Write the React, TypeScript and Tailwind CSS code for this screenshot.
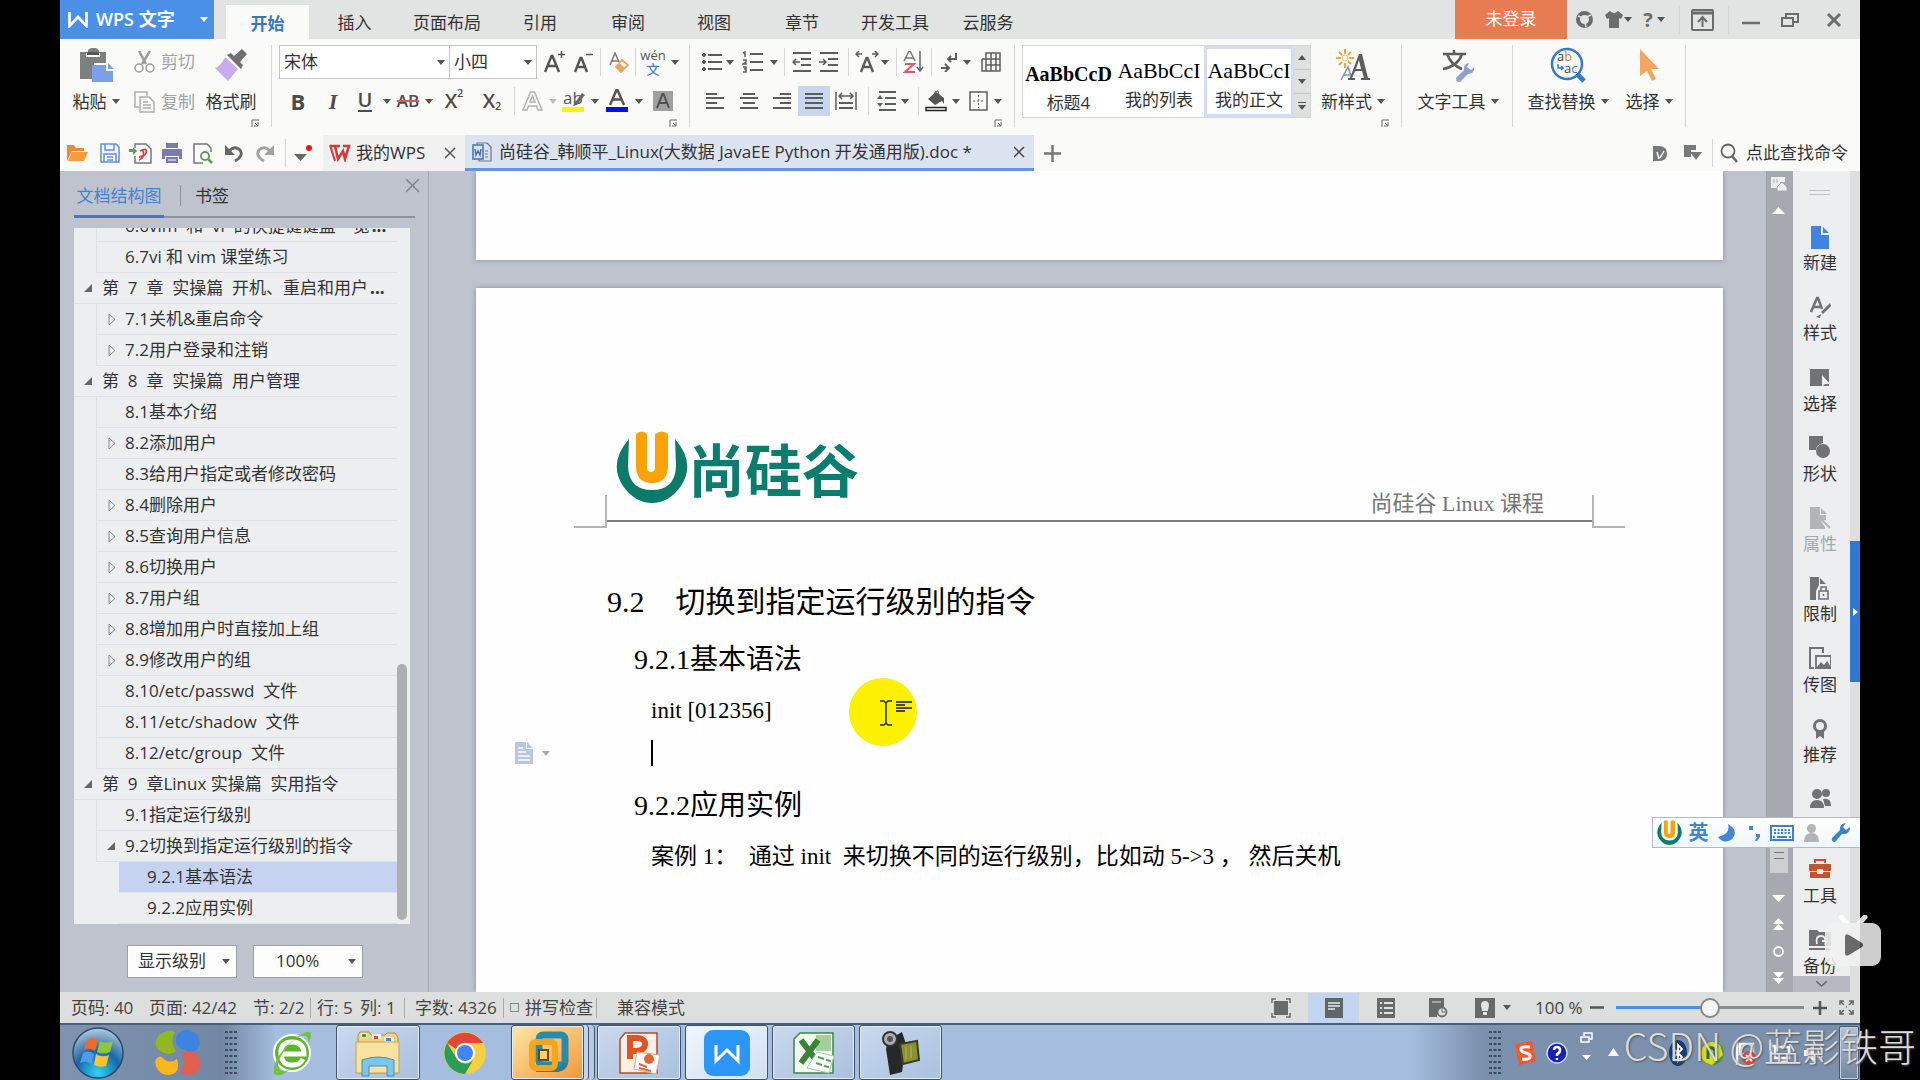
import type { ReactNode } from "react";

const ui = "font-['Open_Sans','Noto_Sans_CJK_SC',sans-serif]";
const serif = "font-['Liberation_Serif','Noto_Sans_CJK_SC',serif]";

function Icon({ w = 20, h = 20, box, children }: { w?: number; h?: number; box?: string; children: ReactNode }) {
  return (
    <svg width={w} height={h} viewBox={box ?? `0 0 ${w} ${h}`} fill="none" aria-hidden="true" className="shrink-0">
      {children}
    </svg>
  );
}

function Caret({ className = "text-[#555]" }: { className?: string }) {
  return (
    <svg width="8" height="5" viewBox="0 0 8 5" aria-hidden="true" className={`shrink-0 ${className}`}>
      <path d="M0 0h8L4 5z" fill="currentColor" />
    </svg>
  );
}

function Tool({ label, w, className = "", children }: { label: string; w: string; className?: string; children: ReactNode }) {
  return (
    <button aria-label={label} className={`flex h-[30px] shrink-0 items-center justify-center ${w} ${className}`}>
      {children}
    </button>
  );
}

function Drop({ label, w = "w-3", className }: { label: string; w?: string; className?: string }) {
  return (
    <Tool label={label} w={w}>
      <Caret className={className} />
    </Tool>
  );
}

function Sep({ w }: { w: string }) {
  return (
    <span className={`flex h-7 shrink-0 justify-center ${w}`}>
      <span className="w-px bg-[#d6d6d6]" />
    </span>
  );
}

function Launcher() {
  return (
    <button aria-label="更多设置" className="ml-auto mr-3 block h-2">
      <Icon w={8} h={8}>
        <path d="M1 8V1h7M7 3v4H3M4 4l3 3" stroke="#666" />
      </Icon>
    </button>
  );
}

function Group({ w, children }: { w: string; children: ReactNode }) {
  return <div className={`flex h-[82px] shrink-0 flex-col gap-px border-r border-[#d6d6d6] ${w}`}>{children}</div>;
}

function Big({ label, w, caret, children }: { label: string; w: string; caret?: boolean; children: ReactNode }) {
  return (
    <button className={`flex shrink-0 flex-col items-center ${w}`}>
      <span className="flex h-[40px] items-center justify-center">{children}</span>
      <span className="flex h-[33px] items-center gap-[5px] whitespace-nowrap">
        {label}
        {caret && <Caret />}
      </span>
    </button>
  );
}

const menus = [
  { name: "插入", w: "w-[91px]" },
  { name: "页面布局", w: "w-[94px]" },
  { name: "引用", w: "w-[92px]" },
  { name: "审阅", w: "w-[84px]" },
  { name: "视图", w: "w-[88px]" },
  { name: "章节", w: "w-[88px]" },
  { name: "开发工具", w: "w-[98px]" },
  { name: "云服务", w: "w-[88px]" },
];

function TitleBar() {
  return (
    <header className="flex h-[39px] shrink-0 items-stretch bg-[#e2e3e3] text-[#333]">
      <button className="flex w-[154px] shrink-0 items-center bg-[#4a90e6] pl-2 text-[18px] font-semibold text-white">
        <Icon w={20} h={17}>
          <path d="M1.5 1v14l8.500-9 8.500 9V1" stroke="#fff" strokeWidth="2.600" />
        </Icon>
        <span className="ml-2 whitespace-nowrap">WPS 文字</span>
        <span className="ml-auto mr-[6px]"><Caret className="text-white" /></span>
      </button>
      <nav className="ml-3 flex items-end">
        <button className="h-[34px] w-[83px] border border-b-0 border-white bg-[#fafbf9] pt-[2px] font-semibold text-[#3a76bd]">开始</button>
        {menus.map((m) => (
          <button key={m.name} className={`h-[34px] pt-[2px] ${m.w}`}>{m.name}</button>
        ))}
      </nav>
      <button className="ml-auto w-28 bg-[#e77b52] pb-[2px] text-white">未登录</button>
      <div className="flex items-center pr-[7px]">
        <Tool label="云" w="w-[34px]">
          <Icon w={17} h={17}>
            <circle cx="8.500" cy="8.500" r="6.500" stroke="#6b6c6c" strokeWidth="4" />
            <path d="M2 5l6 2 2 9M15 4L8 7" stroke="#e2e3e3" strokeWidth="1.500" />
          </Icon>
        </Tool>
        <Tool label="皮肤" w="w-[34px]" className="gap-px">
          <Icon w={18} h={17}>
            <path d="M5 0q4 4 8 0l5 4-2 4-2-1v10H4V7L2 8 0 4z" fill="#6b6c6c" />
          </Icon>
          <Caret />
        </Tool>
        <Tool label="帮助" w="w-[38px]" className="gap-1 text-[20px] font-bold text-[#6b6c6c]">
          ?<Caret />
        </Tool>
        <Sep w="w-3" />
        <Tool label="隐藏功能区" w="w-[34px]">
          <Icon w={23} h={22}>
            <rect x="1" y="1" width="21" height="20" rx="1" stroke="#6b6c6c" strokeWidth="2" />
            <path d="M1 4h21" stroke="#6b6c6c" strokeWidth="3" />
            <path d="M11.500 18V9M7 13l4.500-5 4.500 5" stroke="#6b6c6c" strokeWidth="2" />
          </Icon>
        </Tool>
        <Sep w="w-[18px]" />
        <Tool label="最小化" w="w-7">
          <Icon w={18} h={10}><path d="M0 8h18" stroke="#6b6c6c" strokeWidth="2.500" /></Icon>
        </Tool>
        <Tool label="还原" w="w-[50px]">
          <Icon w={18} h={16}>
            <path d="M1 6h11v8H1zM5 5V2h12v8h-4" stroke="#6b6c6c" strokeWidth="2" />
          </Icon>
        </Tool>
        <Tool label="关闭" w="w-[38px]">
          <Icon w={16} h={16}><path d="M2 2l12 12M14 2L2 14" stroke="#6b6c6c" strokeWidth="3" /></Icon>
        </Tool>
      </div>
    </header>
  );
}

function Lines({ rows }: { rows: number[][] }) {
  return (
    <>
      {rows.map(([x, y, len], i) => (
        <path key={i} d={`M${x} ${y}h${len}`} stroke="#5c5e5e" strokeWidth="2" />
      ))}
    </>
  );
}

function Ribbon() {
  return (
    <div className="flex shrink-0 items-start overflow-hidden bg-[#fafbf9] pb-2 pt-[6px] text-[#333]">
      <Group w="w-[212px]">
        <div className="flex h-[73px]">
          <Big label="粘贴" w="w-[72px]" caret>
            <Icon w={36} h={34}>
              <path d="M2 4h8V2l3-2h5l3 2v2h7v11H16v16H2z" fill="#7e7f7f" />
              <path d="M8 5h14v4H8z" fill="#fafbf9" />
              <path d="M9 4h12v3H9z" fill="#555" />
              <path d="M14 17h14v6h7v11H14z" fill="#7aa1e8" />
              <path d="M30 15l6 6h-6z" fill="#7aa1e8" />
            </Icon>
          </Big>
          <div className="flex w-[70px] flex-col gap-[6px] text-[#a3a3a3]">
            <button className="flex h-[34px] items-center gap-[6px] pl-[2px]">
              <Icon w={21} h={22}>
                <path d="M5 0l7 13M16 0L8 13" stroke="#9b9b9b" strokeWidth="2.500" />
                <circle cx="5" cy="17" r="4" stroke="#9b9b9b" strokeWidth="1.500" />
                <circle cx="16" cy="17" r="4" stroke="#9b9b9b" strokeWidth="1.500" />
              </Icon>
              剪切
            </button>
            <button className="flex h-[33px] items-center gap-[6px] pl-[2px]">
              <Icon w={21} h={22}>
                <path d="M5 16H1V1h12v4" stroke="#b0b0b0" strokeWidth="1.500" />
                <path d="M6 6h9l5 5v10H6zM9 11h5M9 14h8M9 17h8" stroke="#b0b0b0" strokeWidth="1.500" />
              </Icon>
              复制
            </button>
          </div>
          <Big label="格式刷" w="w-[58px]">
            <Icon w={34} h={33}>
              <path d="M11 8l13 12-10 12L1 19q6-2 10-11z" fill="#c8adee" />
              <path d="M13 6l4-2 3 3 8-7 5 5-7 8 3 3-2 4z" fill="#707070" />
            </Icon>
          </Big>
        </div>
        <Launcher />
      </Group>

      <Group w="w-[418px]">
        <div className="flex h-[34px] items-center pl-[7px]">
          <label className="relative flex h-[34px] w-[171px] items-center border border-[#c6c6c6] bg-white">
            <select aria-label="字体" className="w-full appearance-none bg-transparent pl-1 outline-none">
              <option>宋体</option>
            </select>
            <span className="pointer-events-none absolute right-1"><Caret /></span>
          </label>
          <label className="relative flex h-[34px] w-[87px] items-center border border-l-0 border-[#c6c6c6] bg-white">
            <select aria-label="字号" className="w-full appearance-none bg-transparent pl-1 outline-none">
              <option>小四</option>
            </select>
            <span className="pointer-events-none absolute right-1"><Caret /></span>
          </label>
          <Tool label="增大字号" w="w-9">
            <Icon w={22} h={22}>
              <path d="M1 21L7.500 5h1L15 21M4 15h8" stroke="#555" strokeWidth="2.500" />
              <path d="M14 3.500h7M17.500 0v7" stroke="#555" strokeWidth="1.500" />
            </Icon>
          </Tool>
          <Tool label="减小字号" w="w-[22px]">
            <Icon w={20} h={22}>
              <path d="M1 21L6.500 7h1L13 21M3.500 16h7" stroke="#555" strokeWidth="2.500" />
              <path d="M12 3.500h7" stroke="#555" strokeWidth="1.500" />
            </Icon>
          </Tool>
          <Sep w="w-[10px]" />
          <Tool label="清除格式" w="w-7">
            <Icon w={20} h={21}>
              <path d="M1 13L6 1l4 9M3 9h6" stroke="#777" strokeWidth="1.500" />
              <path d="M13 8l6 5-7 7-5-5z" stroke="#e9a45f" strokeWidth="1.800" />
              <path d="M10 11l6 5-4 4-5-5z" fill="#e9a45f" />
            </Icon>
          </Tool>
          <Sep w="w-1" />
          <Tool label="拼音指南" w="w-8" className="flex-col text-[13px] leading-[14px] text-[#555]">
            <span>wén</span>
            <span className="font-medium text-[#4f7ed6]">文</span>
          </Tool>
          <Drop label="拼音选项" />
        </div>
        <div className="mt-1 flex h-[34px] items-center pl-[7px] text-[22px] text-[#4c4c4c]">
          <Tool label="加粗" w="w-[38px]" className="font-bold">B</Tool>
          <Tool label="倾斜" w="w-8" className="font-['Liberation_Serif',serif] font-bold italic">I</Tool>
          <Tool label="下划线" w="w-8"><span className="border-b-2 border-[#4c4c4c] text-[20px] leading-[20px] font-semibold">U</span></Tool>
          <Drop label="下划线选项" />
          <Tool label="删除线" w="w-[30px]" className="text-[17px] font-semibold line-through decoration-[#d65a5a] decoration-2">AB</Tool>
          <Drop label="删除线选项" />
          <Tool label="上标" w="w-[38px]" className="text-[20px] font-semibold">
            X<sup className="-top-2 text-[11px]">2</sup>
          </Tool>
          <Tool label="下标" w="w-[38px]" className="text-[20px] font-semibold">
            X<sub className="top-[5px] text-[11px]">2</sub>
          </Tool>
          <Sep w="w-[6px]" />
          <Tool label="文字效果" w="w-[30px]">
            <Icon w={21} h={20}>
              <path d="M1 19L8.500 1h4L20 19h-4l-1.500-4h-8L5 19zM8 11h5l-2.500-6z" stroke="#b2b2b2" strokeWidth="1.500" />
            </Icon>
          </Tool>
          <Drop label="文字效果选项" className="text-[#bbb]" />
          <Tool label="突出显示" w="w-[30px]">
            <Icon w={24} h={24}>
              <text x="1" y="15" fontSize="17" fontFamily="Open Sans" fill="#555">ab</text>
              <path d="M12 15l8-11 3 2-8 10-4 1z" fill="#666" />
              <path d="M0 18h22v5H0z" fill="#fdf200" />
            </Icon>
          </Tool>
          <Drop label="突出显示选项" />
          <Tool label="字体颜色" w="w-8">
            <Icon w={22} h={24}>
              <path d="M4 16L10.500 1h1L18 16M7 10.500h8" stroke="#555" strokeWidth="2.500" />
              <path d="M0 18h22v5H0z" fill="#0410e0" />
            </Icon>
          </Tool>
          <Drop label="字体颜色选项" />
          <Tool label="字符底纹" w="w-9">
            <Icon w={20} h={20}>
              <path d="M0 0h20v20H0z" fill="#a0a0a0" />
              <path d="M4 17L9.500 3h1L16 17M6 12h8" stroke="#505050" strokeWidth="2" />
            </Icon>
          </Tool>
        </div>
        <Launcher />
      </Group>

      <Group w="w-[325px]">
        <div className="flex h-[34px] items-center pl-2">
          <Tool label="项目符号" w="w-[26px]">
            <Icon w={21} h={20}>
              <Lines rows={[[7, 3, 14], [7, 10, 14], [7, 17, 14]]} />
              <path d="M3 1v4M1 3h4M3 8v4M1 10h4M3 15v4M1 17h4" stroke="#5c5e5e" strokeWidth="2" />
            </Icon>
          </Tool>
          <Drop label="项目符号选项" />
          <Tool label="编号" w="w-8">
            <Icon w={21} h={22}>
              <Lines rows={[[8, 3, 13], [8, 11, 13], [8, 19, 13]]} />
              <path d="M1 2l2-1v5M1 9h3v2L1 13h4M1 16h3v2H2h2v3H1" stroke="#5c5e5e" strokeWidth="1.500" />
            </Icon>
          </Tool>
          <Drop label="编号选项" />
          <Sep w="w-2" />
          <Tool label="减少缩进" w="w-[26px]">
            <Icon w={19} h={20}>
              <Lines rows={[[1, 1, 18], [9, 7, 10], [9, 13, 10], [1, 19, 18]]} />
              <path d="M8 10H2M4 7l-3 3 3 3" stroke="#5c5e5e" strokeWidth="1.500" />
            </Icon>
          </Tool>
          <Tool label="增加缩进" w="w-7">
            <Icon w={19} h={20}>
              <Lines rows={[[1, 1, 18], [9, 7, 10], [9, 13, 10], [1, 19, 18]]} />
              <path d="M0 10h6M4 7l3 3-3 3" stroke="#5c5e5e" strokeWidth="1.500" />
            </Icon>
          </Tool>
          <Sep w="w-3" />
          <Tool label="中文版式" w="w-[25px]">
            <Icon w={24} h={22}>
              <path d="M6 21l5.500-14h1L18 21M8 16h8" stroke="#5c5e5e" strokeWidth="2.500" />
              <path d="M1 3h6M4 0L1 3l3 3M17 3h6M20 0l3 3-3 3" stroke="#5c5e5e" strokeWidth="1.500" />
            </Icon>
          </Tool>
          <Drop label="中文版式选项" />
          <Sep w="w-[10px]" />
          <Tool label="排序" w="w-6">
            <Icon w={21} h={22}>
              <path d="M1 10L6 0h1l5 10M3 7h7" stroke="#777" strokeWidth="1.500" />
              <path d="M2 13h9L2 21h10" stroke="#e0566a" strokeWidth="2" />
              <path d="M17 0v20M14 16l3 4 3-4" stroke="#666" strokeWidth="1.500" />
            </Icon>
          </Tool>
          <Sep w="w-3" />
          <Tool label="显示标记" w="w-6">
            <Icon w={17} h={19}>
              <path d="M15 0v6H7M10 3L7 6l3 3M0 15h7M4 11l4 4-4 4" stroke="#5c5e5e" strokeWidth="2" />
            </Icon>
          </Tool>
          <Drop label="显示标记选项" />
          <Tool label="表格" w="w-9">
            <Icon w={20} h={20}>
              <path d="M5 1h14v18H5zM5 7h14M5 13h14M10 1v18M15 1v18M1 7v12h4M1 7h4" stroke="#5c5e5e" strokeWidth="1.500" />
            </Icon>
          </Tool>
        </div>
        <div className="mt-1 flex h-[34px] items-center pl-2">
          <Tool label="左对齐" w="w-[34px]">
            <Icon w={18} h={16}><Lines rows={[[0, 1, 11], [0, 5, 18], [0, 10, 11], [0, 15, 18]]} /></Icon>
          </Tool>
          <Tool label="居中" w="w-[34px]">
            <Icon w={18} h={16}><Lines rows={[[3, 1, 12], [0, 5, 18], [3, 10, 12], [0, 15, 18]]} /></Icon>
          </Tool>
          <Tool label="右对齐" w="w-8">
            <Icon w={18} h={16}><Lines rows={[[7, 1, 11], [0, 5, 18], [7, 10, 11], [0, 15, 18]]} /></Icon>
          </Tool>
          <Tool label="两端对齐" w="w-8" className="bg-[#c8d7ef]">
            <Icon w={18} h={16}><Lines rows={[[0, 1, 18], [0, 5, 18], [0, 10, 18], [0, 15, 18]]} /></Icon>
          </Tool>
          <Tool label="分散对齐" w="w-8">
            <Icon w={22} h={18}>
              <path d="M1 0v18M21 0v18M4 4h14M7 1L4 4l3 3M15 1l3 3-3 3" stroke="#5c5e5e" strokeWidth="1.500" />
              <Lines rows={[[4, 11, 14], [4, 16, 14]]} />
            </Icon>
          </Tool>
          <Sep w="w-3" />
          <Tool label="行距" w="w-6">
            <Icon w={21} h={20}>
              <Lines rows={[[3, 1, 17], [9, 7, 11], [9, 13, 11], [3, 19, 17]]} />
              <path d="M1 8l3-4 3 4zM1 12l3 4 3-4z" fill="#5c5e5e" />
            </Icon>
          </Tool>
          <Drop label="行距选项" w="w-[14px]" />
          <Sep w="w-3" />
          <Tool label="底纹颜色" w="w-6">
            <Icon w={22} h={22}>
              <path d="M3 9l8-7 8 6v6l-2-3-7 4z" fill="#555" />
              <path d="M9 5q1-5 4-4l1 4" stroke="#555" />
              <path d="M1 17.500h20v3H1z" stroke="#222" strokeWidth="1.500" />
            </Icon>
          </Tool>
          <Drop label="底纹选项" w="w-4" />
          <Tool label="边框" w="w-7">
            <Icon w={19} h={20}>
              <path d="M1 1h17v18H1z" stroke="#5c5e5e" strokeWidth="1.500" />
              <path d="M9.500 4v13M4 10h12" stroke="#5c5e5e" strokeDasharray="2 2" />
            </Icon>
          </Tool>
          <Drop label="边框选项" />
        </div>
        <Launcher />
      </Group>

      <Group w="w-[387px]">
        <div className="flex h-[73px] pl-[7px]">
          <div className="flex h-[73px] w-[289px] border border-[#d5d7da] bg-white text-center">
            <button className="w-[91px] overflow-hidden">
              <StyleSample text="AaBbCcD" name="标题4" bold />
            </button>
            <button className="w-[90px] overflow-hidden border-3 border-transparent">
              <StyleSample text="AaBbCcI" name="我的列表" />
            </button>
            <button className="w-[90px] overflow-hidden border-3 border-[#d3dbf5]">
              <StyleSample text="AaBbCcI" name="我的正文" />
            </button>
            <div className="flex flex-1 flex-col divide-y divide-[#c8c8c8] bg-[#dfe0e0]">
              <button aria-label="上一行" className="flex flex-1 items-center justify-center">
                <Icon w={8} h={5}><path d="M0 5h8L4 0z" fill="#555" /></Icon>
              </button>
              <button aria-label="下一行" className="flex flex-1 items-center justify-center"><Caret /></button>
              <button aria-label="全部样式" className="flex flex-1 flex-col items-center justify-center gap-[2px]">
                <span className="h-px w-2 bg-[#555]" />
                <Caret />
              </button>
            </div>
          </div>
          <Big label="新样式" w="w-[84px]" caret>
            <Icon w={34} h={34}>
              <path d="M9 1v5M9 15v5M0 10h5M13 10h5M3 4l3 3M12 13l3 3M15 4l-3 3M3 17l3-3" stroke="#f0a53c" strokeWidth="2" />
              <circle cx="9" cy="10" r="3" stroke="#f5c265" />
              <path d="M5 32l7-13 4 12M7 27h8" stroke="#8592b8" strokeWidth="1.500" />
              <path d="M23 6h3l6 24h2v2h-9v-2h3l-2-7h-7l-3 7h3v2h-7v-2h2zM20 21h5l-2-9z" fill="#5c5e5e" />
            </Icon>
          </Big>
        </div>
        <Launcher />
      </Group>

      <Group w="w-[111px]">
        <Big label="文字工具" w="w-[112px]" caret>
          <Icon w={33} h={33}>
            <path d="M1 5h23M12 1v4M5 5q4 11 15 15M20 5Q16 17 1 20" stroke="#5c5e5e" strokeWidth="2.500" />
            <path d="M14 29l8-8q-1-6 5-7l-2 4 4 3 3-3q1 7-6 7l-8 8q-4 0-4-4z" fill="#8f9fd0" />
          </Icon>
        </Big>
      </Group>

      <Group w="w-[173px]">
        <div className="flex pl-[2px]">
          <Big label="查找替换" w="w-[106px]" caret>
            <Icon w={36} h={36}>
              <circle cx="17" cy="17" r="15" stroke="#3578cf" strokeWidth="2.500" />
              <path d="M27 27l7 7" stroke="#3578cf" strokeWidth="5" />
              <text x="7" y="14" fontSize="13" fontFamily="Open Sans" fill="#444">a<tspan fill="#d9823b">b</tspan></text>
              <text x="14" y="26" fontSize="13" fontFamily="Open Sans" fill="#444">a<tspan fill="#3578cf">c</tspan></text>
              <path d="M8 17v4h5M11 19l2 2-2 2" stroke="#3578cf" strokeWidth="1.500" />
            </Icon>
          </Big>
          <Big label="选择" w="w-[56px]" caret>
            <Icon w={21} h={32}>
              <path d="M1 0l19 20h-8l5 10-4 2-5-10-7 5z" fill="#f2a65f" />
            </Icon>
          </Big>
        </div>
      </Group>
    </div>
  );
}

function StyleSample({ text, name, bold }: { text: string; name: string; bold?: boolean }) {
  return (
    <span className="flex h-full flex-col items-center justify-end">
      <span className={`${serif} whitespace-nowrap leading-[30px] text-black ${bold ? "text-[20px] font-bold" : "text-[22px]"}`}>{text}</span>
      <span className="whitespace-nowrap leading-[28px]">{name}</span>
    </span>
  );
}

function TabStrip() {
  return (
    <div className="flex h-9 shrink-0 items-center bg-[#fafbf9] text-[#333]">
      <Tool label="打开" w="w-[34px]">
        <Icon w={22} h={18}>
          <path d="M1 17V1h7l2 3h8v3H6z" fill="#ec8b35" />
          <path d="M6 8h16l-4 9H2z" fill="#f79b3e" />
        </Icon>
      </Tool>
      <Tool label="保存" w="w-[31px]">
        <Icon w={20} h={20}>
          <path d="M1 1h15l3 3v15H1z" stroke="#5f8ee0" strokeWidth="1.500" />
          <path d="M5 1v6h9V1M4 19v-8h12v8M7 14h6M7 17h6" stroke="#5f8ee0" strokeWidth="1.500" />
        </Icon>
      </Tool>
      <Tool label="输出为PDF" w="w-[31px]">
        <Icon w={23} h={21}>
          <path d="M6 5V1h11l5 5v14H6v-7" stroke="#777" strokeWidth="1.500" />
          <path d="M0 6h4V4l4 4-4 4v-3H0z" fill="#58a05a" />
          <path d="M11 8q8-4 6 2-1 3-7 4M14 7q2 8-4 10" stroke="#d24545" strokeWidth="1.800" />
        </Icon>
      </Tool>
      <Tool label="打印" w="w-[31px]">
        <Icon w={20} h={20}>
          <path d="M4 0h12v5H4zM0 6h20v10h-3v-3H3v3H0zM4 14h12v6H4z" fill="#7d7ab2" />
          <path d="M6 17h8" stroke="#fff" />
        </Icon>
      </Tool>
      <Tool label="打印预览" w="w-[31px]">
        <Icon w={20} h={21}>
          <path d="M18 9V5l-4-4H1v19h9" stroke="#777" strokeWidth="1.500" />
          <circle cx="12" cy="13" r="4" stroke="#5f9c55" strokeWidth="1.800" />
          <path d="M15 16l4 4" stroke="#5f9c55" strokeWidth="2.500" />
        </Icon>
      </Tool>
      <Tool label="撤销" w="w-[31px]">
        <Icon w={18} h={18}>
          <path d="M4 7q6-6 11-1 4 6-5 11" stroke="#666" strokeWidth="3" />
          <path d="M0 1v10h10z" fill="#666" />
        </Icon>
      </Tool>
      <Tool label="恢复" w="w-[31px]">
        <Icon w={18} h={18}>
          <path d="M14 7Q8 1 3 6q-4 6 5 11" stroke="#a2a2a2" strokeWidth="3" />
          <path d="M18 1v10H8z" fill="#a2a2a2" />
        </Icon>
      </Tool>
      <Sep w="w-[10px]" />
      <Tool label="自定义快速访问" w="w-[33px]" className="pr-[5px]">
        <Icon w={20} h={20}>
          <path d="M0 11h13l-6.500 7z" fill="#666" />
          <circle cx="15" cy="5" r="3" fill="#f0120c" />
        </Icon>
      </Tool>
      <div className="flex h-9 w-[142px] shrink-0 items-center bg-[#f2f1f1] pl-[6px]">
        <button className="flex items-center gap-[5px] whitespace-nowrap">
          <Icon w={22} h={18}>
            <path d="M1 2h10M6 2l3 13 5-8 2 8 4-13h-6" stroke="#d8393c" strokeWidth="2.600" />
            <path d="M1 1l5 16" stroke="#d8393c" strokeWidth="2" />
          </Icon>
          我的WPS
        </button>
        <button aria-label="关闭我的WPS" className="ml-auto mr-[9px]">
          <Icon w={11} h={12}><path d="M0 1l10 10M10 1L0 11" stroke="#555" strokeWidth="1.500" /></Icon>
        </button>
      </div>
      <div className="flex h-9 w-[569px] shrink-0 items-center border-b-3 border-[#6496d8] bg-[#dbe2f0] pl-[7px]">
        <button className="flex items-center gap-[7px] whitespace-nowrap">
          <Icon w={20} h={20}>
            <path d="M1 3h10v14H1z" fill="#dbe2f0" stroke="#4471b5" strokeWidth="1.500" />
            <path d="M3 7l1 6 2-4 2 4 1-6" stroke="#4471b5" strokeWidth="1.500" />
            <path d="M5 3V1h10l4 4v14H7v-2M13 9h3M13 12h3M13 15h3" stroke="#6c7890" strokeWidth="1.200" />
          </Icon>
          尚硅谷_韩顺平_Linux(大数据 JavaEE Python 开发通用版).doc *
        </button>
        <button aria-label="关闭文档" className="ml-auto mr-[9px]">
          <Icon w={11} h={12}><path d="M0 1l10 10M10 1L0 11" stroke="#444" strokeWidth="1.500" /></Icon>
        </button>
      </div>
      <Tool label="新建标签" w="w-9">
        <Icon w={17} h={17}><path d="M8.500 0v17M0 8.500h17" stroke="#777" strokeWidth="2.500" /></Icon>
      </Tool>
      <div className="ml-auto flex items-center pr-3">
        <Tool label="文档" w="w-9">
          <Icon w={14} h={15}>
            <path d="M0 0h6q8 0 8 7.500T6 15H0z" fill="#77787a" />
            <path d="M4 6l2 7M7 12l4-7" stroke="#fafbf9" strokeWidth="1.500" />
          </Icon>
        </Tool>
        <Tool label="窗口" w="w-[30px]">
          <Icon w={18} h={16}>
            <path d="M0 0h12v5H7v7H0z" fill="#77787a" />
            <path d="M6 7h12l-6 8z" fill="#77787a" />
          </Icon>
        </Tool>
        <Sep w="w-2" />
        <button className="flex items-center gap-2 whitespace-nowrap pl-1">
          <Icon w={18} h={20}>
            <circle cx="8" cy="8" r="6.500" stroke="#666" strokeWidth="1.800" />
            <path d="M12 13l5 6" stroke="#666" strokeWidth="2.500" />
          </Icon>
          点此查找命令
        </button>
      </div>
    </div>
  );
}

type Node = { text: string; level: 0 | 1 | 2; mark?: "open" | "closed"; cut?: boolean; active?: boolean };

const outline: Node[] = [
  { text: "6.6vim  和  vi  的快捷键键盘一览", level: 1, cut: true },
  { text: "6.7vi 和 vim 课堂练习", level: 1 },
  { text: "第  7  章  实操篇  开机、重启和用户", level: 0, mark: "open", cut: true },
  { text: "7.1关机&重启命令", level: 1, mark: "closed" },
  { text: "7.2用户登录和注销", level: 1, mark: "closed" },
  { text: "第  8  章  实操篇  用户管理", level: 0, mark: "open" },
  { text: "8.1基本介绍", level: 1 },
  { text: "8.2添加用户", level: 1, mark: "closed" },
  { text: "8.3给用户指定或者修改密码", level: 1 },
  { text: "8.4删除用户", level: 1, mark: "closed" },
  { text: "8.5查询用户信息", level: 1, mark: "closed" },
  { text: "8.6切换用户", level: 1, mark: "closed" },
  { text: "8.7用户组", level: 1, mark: "closed" },
  { text: "8.8增加用户时直接加上组", level: 1, mark: "closed" },
  { text: "8.9修改用户的组", level: 1, mark: "closed" },
  { text: "8.10/etc/passwd  文件", level: 1 },
  { text: "8.11/etc/shadow  文件", level: 1 },
  { text: "8.12/etc/group  文件", level: 1 },
  { text: "第  9  章Linux 实操篇  实用指令", level: 0, mark: "open" },
  { text: "9.1指定运行级别", level: 1 },
  { text: "9.2切换到指定运行级别的指令", level: 1, mark: "open" },
  { text: "9.2.1基本语法", level: 2, active: true },
  { text: "9.2.2应用实例", level: 2 },
];

const indent = ["ml-0 pl-[10px]", "ml-[22px] border-l pl-[10px]", "ml-[45px] pl-[10px]"];

function OutlineRow({ node }: { node: Node }) {
  return (
    <li className="flex h-[31px] shrink-0">
      <button
        className={`flex flex-1 items-center border-b border-[#e0e1e4] text-left ${indent[node.level]} ${
          node.active ? "bg-[#c5d3f1]" : ""
        }`}
      >
        <span className="w-[18px] shrink-0">
          {node.mark === "open" && <Icon w={9} h={9}><path d="M8 0v8H0z" fill="#666" /></Icon>}
          {node.mark === "closed" && <Icon w={9} h={13}><path d="M2 1l6 5.500L2 12z" stroke="#888" /></Icon>}
        </span>
        <span className="whitespace-pre">{node.text}</span>
        {node.cut && <span className="ml-[2px] font-bold">...</span>}
      </button>
    </li>
  );
}

function Sidebar() {
  return (
    <aside className="flex w-[369px] shrink-0 flex-col border-r border-[#a3a7b2] bg-[#bfc3cd] pl-[14px] text-[#333]">
      <div className="flex h-[47px] w-[341px] shrink-0 items-stretch border-b-2 border-[#8f929b]">
        <button className="-mb-[2px] w-[90px] border-b-3 border-[#3d7bc8] pt-[6px] text-[#3f84d6]">文档结构图</button>
        <span className="ml-4 mt-[14px] mb-[10px] w-px bg-[#8f929b]" />
        <button className="ml-[14px] pt-1">书签</button>
        <button aria-label="关闭窗格" className="-mr-[5px] mb-4 ml-auto">
          <Icon w={14} h={14}><path d="M0 0l13 13M13 0L0 13" stroke="#80838b" strokeWidth="1.500" /></Icon>
        </button>
      </div>
      <div className="mt-[10px] flex min-h-0 w-[336px] flex-1 bg-[#eceef0]">
        <ul className="flex min-w-0 flex-1 flex-col justify-end overflow-hidden">
          {outline.map((node) => (
            <OutlineRow key={node.text} node={node} />
          ))}
        </ul>
        <div className="flex w-[13px] flex-col justify-end pb-1">
          <span className="h-[37%] w-[10px] rounded-full bg-[#adaeaf]" />
        </div>
      </div>
      <div className="flex h-[68px] shrink-0 items-center gap-4 pl-[53px] pt-[6px]">
        <label className="relative flex h-[33px] w-[110px] items-center border border-[#9da0a8] bg-[#fcfdfc]">
          <select aria-label="显示级别" className="w-full appearance-none bg-transparent pl-[10px] outline-none">
            <option>显示级别</option>
          </select>
          <span className="pointer-events-none absolute right-[6px]"><Caret /></span>
        </label>
        <label className="relative flex h-[33px] w-[110px] items-center border border-[#9da0a8] bg-[#fcfdfc]">
          <select aria-label="窗格比例" className="w-full appearance-none bg-transparent pl-[22px] outline-none">
            <option>100%</option>
          </select>
          <span className="pointer-events-none absolute right-[6px]"><Caret /></span>
        </label>
      </div>
    </aside>
  );
}

function Emblem({ size }: { size: number }) {
  return (
    <Icon w={size} h={size} box="0 0 72 72">
      <path d="M13 8Q-8 32 7 55q12 17 29 17t29-17q15-23-6-47l1 27Q59 59 36 59T12 35z" fill="#0d7a6a" />
      <path d="M20 3q6-5 11 0v33q0 5 4 5t4-5V3q7-5 13 0v32q0 17-16 17T20 35z" fill="#fba209" />
    </Icon>
  );
}

function Document() {
  return (
    <main className="flex min-w-0 flex-1 flex-col gap-7 overflow-hidden bg-[#bfc3cd] pl-[47px] pr-[43px]">
      <div className="h-[89px] shrink-0 bg-[#fdfefd] shadow-[0_0_5px_#888c98]" />
      <article className={`relative min-h-0 flex-1 bg-[#fdfefd] text-black shadow-[0_0_5px_#888c98] ${serif}`}>
        <div className="flex items-end px-[98px] pt-[143px]">
          <span className="h-[33px] w-[33px] shrink-0 border-b-2 border-r-2 border-[#b4b4b4]" />
          <div className="mb-[6px] flex min-w-0 flex-1 items-end border-b-2 border-[#7b7b7b] pb-[5px] pl-[9px] pr-[48px]">
            <div className="flex items-center pb-3">
              <Emblem size={72} />
              <span className="font-['Noto_Sans_CJK_SC',sans-serif] text-[57px] font-bold leading-[68px] text-[#0b7d6e]">尚硅谷</span>
            </div>
            <span className="ml-auto whitespace-nowrap text-[22px] leading-[22px] text-[#777]">尚硅谷 Linux 课程</span>
          </div>
          <span className="h-[33px] w-[33px] shrink-0 border-b-2 border-l-2 border-[#b4b4b4]" />
        </div>
        <h2 className="mt-[42px] flex h-[62px] items-center gap-[31px] pl-[131px] text-[30px]">
          <span>9.2</span>
          <span>切换到指定运行级别的指令</span>
        </h2>
        <h3 className="flex h-14 items-center pl-[158px] text-[28px]">9.2.1基本语法</h3>
        <p className="flex h-[46px] items-center pl-[175px] text-[23px]">init [012356]</p>
        <div className="flex h-[38px] items-center pl-[39px]">
          <button aria-label="段落布局" className="flex w-[136px] items-center gap-[9px]">
            <Icon w={18} h={22}>
              <path d="M0 0h11v7h7v15H0z" fill="#b8c7e6" />
              <path d="M12 0l6 6h-6z" fill="#b8c7e6" />
              <path d="M3 6h5M3 10h8M3 14h12M3 18h12" stroke="#fff" strokeWidth="1.500" />
            </Icon>
            <Caret className="text-[#a5a9b4]" />
          </button>
          <span className="h-[26px] w-[2px] bg-black" />
        </div>
        <h3 className="flex h-[68px] items-center pl-[158px] text-[28px]">9.2.2应用实例</h3>
        <p className="flex h-[34px] items-center whitespace-pre pl-[175px] text-[23px]">
          案例 1：  通过 init  来切换不同的运行级别，比如动 5-&gt;3 ， 然后关机
        </p>
        <div className="absolute left-[373px] top-[390px] flex size-[68px] items-center justify-end rounded-full bg-[#fbf100] pr-1 pt-1">
          <Icon w={36} h={30}>
            <path d="M3 2h4l2 2 2-2h4M9 4v20M3 26h4l2-2 2 2h4" stroke="#2a2a2a" strokeWidth="1.500" />
            <path d="M19 3h16M19 6h9M19 9h16M19 12h9" stroke="#4a4650" strokeWidth="1.800" />
          </Icon>
        </div>
      </article>
    </main>
  );
}

function ScrollColumn() {
  return (
    <div className="flex w-[27px] shrink-0 flex-col items-center border-l border-[#a0a3aa] bg-[#a6a9af] pr-[3px]">
      <button aria-label="标尺" className="mt-[6px]">
        <Icon w={16} h={14}>
          <path d="M0 0h14v5H9v6H0z" fill="#eceef0" />
          <path d="M3 2v4M6 2v4" stroke="#a6a9af" />
          <path d="M11 5l5 5v4H6v-4z" fill="#eceef0" stroke="#a6a9af" />
        </Icon>
      </button>
      <button aria-label="向上滚动" className="mt-4"><Icon w={13} h={7}><path d="M0 7l6.500-7L13 7z" fill="#fff" /></Icon></button>
      <div className="flex w-[18px] flex-1 flex-col justify-end">
        <span className="flex h-11 flex-col items-center justify-end gap-[5px] bg-[#cdcfd1] pb-[14px]">
          <span className="h-px w-[10px] bg-[#777]" />
          <span className="h-px w-[10px] bg-[#777]" />
        </span>
      </div>
      <div className="flex h-[119px] flex-col items-center justify-between pb-2 pt-[22px]">
        <button aria-label="向下滚动"><Icon w={13} h={8}><path d="M0 0l6.500 7L13 0z" fill="#fff" /></Icon></button>
        <button aria-label="上一页"><Icon w={11} h={12}><path d="M0 6l5.500-6L11 6zM0 12l5.500-6 5.500 6z" fill="#fff" /></Icon></button>
        <button aria-label="选择浏览对象"><Icon w={11} h={11}><circle cx="5.500" cy="5.500" r="4.500" stroke="#fff" strokeWidth="1.800" /></Icon></button>
        <button aria-label="下一页"><Icon w={11} h={12}><path d="M0 0l5.500 6L11 0zM0 6l5.500 6L11 6z" fill="#fff" /></Icon></button>
      </div>
    </div>
  );
}

const panes: { name: string; off?: boolean; bare?: boolean; icon: ReactNode }[] = [
  { name: "新建", icon: <path d="M2 0h10v9h8v14H2zM14 1l6 6h-6z" fill="#3f84e0" /> },
  { name: "样式", icon: <><path d="M2 16L8 2h1l4 11M4 11h7" stroke="#717273" strokeWidth="2.500" /><path d="M12 16L21 7l1 3-8 8zM7 21l5-3-1 4z" fill="#717273" /></> },
  { name: "选择", icon: <><path d="M1 3h19v17H1z" fill="#717273" /><path d="M13 9v12l3-3h5z" fill="#eceef0" /></> },
  { name: "形状", icon: <><path d="M0 0h14v7q-7 2-7 7H0z" fill="#717273" /><circle cx="14" cy="15" r="7" fill="#717273" /></> },
  { name: "属性", off: true, icon: <><path d="M1 0h10v8h6v5l-5 1 4 6v2H1zM12 1l6 6h-6z" fill="#b3b4b6" /><path d="M10 10q5 0 4 4l7 7" stroke="#b3b4b6" strokeWidth="2" /></> },
  { name: "限制", icon: <><path d="M1 0h9v8l-3 6v9H1zM11 1l6 6h-6z" fill="#717273" /><path d="M10 14h9v8h-9zM12 14v-4h5v4M14.500 17v2" stroke="#717273" strokeWidth="1.600" /></> },
  { name: "传图", icon: <><path d="M1 22V1h13v5M1 21h4" stroke="#717273" strokeWidth="2" /><path d="M7 9h15v12H7z" stroke="#717273" strokeWidth="1.800" /><path d="M8 20l4-5 3 3 3-4 4 6z" fill="#717273" /></> },
  { name: "推荐", icon: <><circle cx="11" cy="8" r="5.500" stroke="#717273" strokeWidth="3" /><path d="M7 13h8v8l-4-3-4 3z" fill="#717273" /></> },
  { name: "共享", bare: true, icon: <><circle cx="8" cy="6" r="5" fill="#717273" /><circle cx="17" cy="5" r="4" fill="#717273" /><path d="M1 20q0-8 7-8t7 8zM14 11q8-2 8 7h-6z" fill="#717273" /></> },
  { name: "工具", icon: <><path d="M0 6h22v7h-8v-2H8v2H0zM1 14h7v2h6v-2h7v6H1z" fill="#c4532f" /><path d="M6 5V2h10v3" stroke="#c4532f" strokeWidth="2" /></> },
  { name: "备份", icon: <><path d="M0 2h8l2 2h12v14H0zM0 20h22v2H0z" fill="#717273" /><path d="M8 16q-2-8 4-8 5 0 4 6M13 13h4l-1 4" stroke="#eceef0" strokeWidth="1.800" /></> },
];

function PaneBar() {
  return (
    <div className="flex w-[67px] shrink-0 bg-[#dcdfdd]">
      <div className="flex w-[57px] flex-col bg-[#eceef0] text-[#333]">
        <div className="ml-4 mt-[19px] h-[5px] w-[21px] border-y border-[#c0c2c4]" />
        <nav className="-mb-[2px] mt-7 flex min-h-0 flex-1 flex-col justify-between pr-[3px]">
          {panes.map((p) => (
            <button key={p.name} aria-label={p.name} className={`flex h-[52px] flex-col items-center ${p.off ? "text-[#a8a8a8]" : ""}`}>
              <span className="flex h-7 items-center"><Icon w={22} h={23}>{p.icon}</Icon></span>
              {!p.bare && <span className="leading-6">{p.name}</span>}
            </button>
          ))}
        </nav>
        <button aria-label="更多窗格" className="flex h-4 shrink-0 items-center justify-center bg-[#b6b9c0]">
          <Icon w={11} h={6}><path d="M0 0l5.500 5L11 0" stroke="#666" strokeWidth="1.500" /></Icon>
        </button>
      </div>
      <div className="flex flex-1 flex-col pt-[370px]">
        <button aria-label="展开" className="flex h-[141px] items-center justify-center bg-[#2f77d0]">
          <Icon w={5} h={8}><path d="M0 0l5 4-5 4z" fill="#fff" /></Icon>
        </button>
      </div>
    </div>
  );
}

function StatusBar() {
  return (
    <footer className="flex h-[31px] shrink-0 items-center whitespace-nowrap bg-[#dcdfdd] pl-[11px] text-[#444]">
      <span className="w-[78px]">页码: 40</span>
      <span className="w-[104px]">页面: 42/42</span>
      <span className="w-[58px] border-r border-[#aaa] leading-5">节: 2/2</span>
      <span className="w-[45px] pl-[6px]">行: 5</span>
      <span className="w-[49px] border-r border-[#aaa] pl-1 leading-5">列: 1</span>
      <span className="w-[99px] border-r border-[#aaa] pl-[10px] leading-5">字数: 4326</span>
      <label className="flex h-5 w-[93px] items-center gap-[6px] border-r border-[#aaa] pl-[6px]">
        <input type="checkbox" className="size-[9px] appearance-none border border-[#888]" />
        拼写检查
      </label>
      <span className="pl-5">兼容模式</span>
      <div className="ml-auto flex items-center">
        <Tool label="全屏" w="w-[54px]">
          <Icon w={20} h={20}>
            <path d="M1 5V1h4M15 1h4v4M19 15v4h-4M5 19H1v-4" stroke="#686a6a" strokeWidth="1.500" />
            <path d="M3 3h14v14H3z" fill="#686a6a" />
          </Icon>
        </Tool>
        <Tool label="页面视图" w="w-[51px]" className="bg-[#c4d6ef]">
          <Icon w={18} h={20}>
            <path d="M0 0h18v20H0z" fill="#5f6569" />
            <path d="M3 5h12M3 8h12M3 11h7" stroke="#e6eaf0" strokeWidth="1.500" />
          </Icon>
        </Tool>
        <Tool label="大纲" w="w-[54px]">
          <Icon w={18} h={20}>
            <path d="M0 0h18v20H0z" fill="#686a6a" />
            <path d="M3 5h2M3 10h2M3 15h2M7 5h9M7 10h9M7 15h9" stroke="#e2e4e3" strokeWidth="1.800" />
          </Icon>
        </Tool>
        <Tool label="Web版式" w="w-[50px]">
          <Icon w={19} h={20}>
            <path d="M0 0h15v9q-7 0-7 9v1H0z" fill="#686a6a" />
            <path d="M3 4h9" stroke="#e2e4e3" />
            <circle cx="13" cy="14" r="4.500" stroke="#686a6a" strokeWidth="1.800" />
            <path d="M13 11v3h3" stroke="#686a6a" />
          </Icon>
        </Tool>
        <Tool label="护眼模式" w="w-[60px]" className="gap-2">
          <Icon w={20} h={20}>
            <path d="M0 0h20v20H0z" fill="#686a6a" />
            <path d="M7 12q-3-9 3-9t3 9v1H7zM8 14h4v3H8z" fill="#e2e4e3" />
          </Icon>
          <Caret />
        </Tool>
        <span className="ml-3 w-[54px]">100 %</span>
        <Tool label="缩小" w="w-4"><Icon w={14} h={3}><path d="M0 1.500h14" stroke="#555" strokeWidth="2.500" /></Icon></Tool>
        <div className="relative ml-[11px] flex h-6 w-[188px] items-center">
          <span className="h-[3px] w-1/2 bg-[#4a90e6]" />
          <span className="h-[3px] w-1/2 bg-[#8b8d8d]" />
          <input
            type="range"
            aria-label="缩放比例"
            defaultValue={50}
            className="absolute inset-0 w-full appearance-none bg-transparent [&::-webkit-slider-thumb]:size-5 [&::-webkit-slider-thumb]:appearance-none [&::-webkit-slider-thumb]:rounded-full [&::-webkit-slider-thumb]:border-2 [&::-webkit-slider-thumb]:border-[#888] [&::-webkit-slider-thumb]:bg-[#f4f5f5]"
          />
        </div>
        <Tool label="放大" w="w-8"><Icon w={14} h={14}><path d="M0 7h14M7 0v14" stroke="#555" strokeWidth="2.500" /></Icon></Tool>
        <Tool label="适应窗口" w="w-6" className="pr-1">
          <Icon w={15} h={15}>
            <path d="M1 5V1h4M10 1h4v4M14 10v4h-4M5 14H1v-4M1 1l4 4M14 1l-4 4M14 14l-4-4M1 14l4-4M7 7h1" stroke="#666" strokeWidth="1.500" />
          </Icon>
        </Tool>
      </div>
    </footer>
  );
}

function Grip() {
  return (
    <Icon w={12} h={44}>
      {[1, 7, 13, 19, 25, 31, 37, 42].map((y) => (
        <path key={y} d={`M0 ${y}h12`} stroke="#3f4c60" strokeWidth="2" strokeDasharray="3 1.500" />
      ))}
    </Icon>
  );
}

function Task({ label, w, className = "bg-linear-to-br from-[#c9d9ee] to-[#a9c0df]", children }: { label: string; w: string; className?: string; children: ReactNode }) {
  return (
    <button
      aria-label={label}
      className={`flex h-[55px] shrink-0 items-center justify-center rounded-[3px] border border-[#3c5270] shadow-[inset_0_0_0_1px_#e4eefa] ${w} ${className}`}
    >
      {children}
    </button>
  );
}

function Taskbar() {
  return (
    <div className="flex h-[57px] shrink-0 items-center border-t-2 border-[#4a6079] bg-[linear-gradient(90deg,#7f93b0_0,#7187a4_9%,#a5bedf_12%,#a5bedf_75%,#7b90ac_79%,#7b90ac_100%)]">
      <button aria-label="开始" className="flex w-[76px] shrink-0 justify-center">
        <Icon w={52} h={52}>
          <defs>
            <radialGradient id="orb" cx="0.5" cy="0.900" r="0.900">
              <stop offset="0" stopColor="#2fd4f7" />
              <stop offset="0.500" stopColor="#1668a8" />
              <stop offset="1" stopColor="#b9cbdc" />
            </radialGradient>
          </defs>
          <circle cx="26" cy="26" r="25" fill="url(#orb)" stroke="#28486c" strokeWidth="1.500" />
          <path d="M15 13q6-4 11 0l-3 11q-5-4-11-1z" fill="#ee6a2c" />
          <path d="M28 14q6 3 13 0l-3 11q-7 3-13 0z" fill="#8dc63f" />
          <path d="M11 26q6-3 11 1l-3 10q-4-4-11-1z" fill="#4d9ee8" />
          <path d="M24 27q6 4 13 1l-3 11q-7 2-12-1z" fill="#fbc330" />
        </Icon>
      </button>
      <button aria-label="应用" className="ml-[19px] shrink-0">
        <Icon w={46} h={46}>
          <path d="M13 1q4-1 7 1-6 9 1 19-5 5-12 2Q-1 19 1 11q2-8 12-10z" fill="#8fb91e" />
          <path d="M25 2q9-5 17 3 6 10-2 16-6 2-10-1-8-2-9-8-1-6 4-10z" fill="#3d83e0" />
          <path d="M1 29q4-5 8 0 6 5 13 0 3 9-2 14-10 5-17-3-4-6-2-11z" fill="#f8b71c" />
          <path d="M27 23q12-5 17 4 5 13-6 17-8 2-13-2 8-9 2-19z" fill="#e25f4d" />
        </Icon>
      </button>
      <span className="ml-[24px]"><Grip /></span>
      <button aria-label="浏览器" className="ml-[35px] shrink-0">
        <Icon w={42} h={46}>
          <circle cx="20" cy="23" r="18" fill="#5db52c" stroke="#fff" strokeWidth="2" />
          <path d="M10 24h22q0-12-12-12T9 24t12 11q7 0 10-6" stroke="#fff" strokeWidth="5" />
          <path d="M2 44Q0 30 17 14 32 0 38 2q3 3-2 12 1-7-3-8Q25 4 12 21 4 33 7 38q3 5 10 2Q8 48 2 44z" fill="#72c242" />
        </Icon>
      </button>
      <Task label="资源管理器" w="ml-[22px] w-[84px]">
        <Icon w={46} h={48}>
          <path d="M3 6l2-3h9l2 3h14l2-2h8l3 4v36H3z" fill="#f0d283" stroke="#b88c36" />
          <path d="M6 4h6v5H6zM17 5h9v5h-9zM29 8h10v5H29z" fill="#f8f8f5" />
          <path d="M7 5h4v3H7z" fill="#3c9a39" />
          <path d="M19 7h4v3h-4z" fill="#e25325" />
          <path d="M31 9h5v3h-5z" fill="#3a85da" />
          <path d="M1 13h43v31H1z" fill="#f7e39f" stroke="#c8a24c" />
          <path d="M7 47V31q16-6 32 0v16h-7V37H14v10z" fill="#79c6ee" stroke="#468db6" />
        </Icon>
      </Task>
      <button aria-label="Chrome" className="ml-6 shrink-0">
        <Icon w={42} h={42}>
          <circle cx="21" cy="21" r="21" fill="#f8cf3f" />
          <path d="M3 11A21 21 0 0 1 39 11H21a10 10 0 0 0-9 6z" fill="#df483c" />
          <path d="M3 11a21 21 0 0 0 18 31l8-14a10 10 0 0 1-17-3z" fill="#2c9c57" />
          <circle cx="21" cy="21" r="10" fill="#fff" />
          <circle cx="21" cy="21" r="8" fill="#4285f4" />
        </Icon>
      </button>
      <Task label="虚拟机" w="ml-[25px] w-[73px]" className="bg-linear-to-br from-[#fce6a4] to-[#f29733]">
        <Icon w={42} h={44}>
          <rect x="12" y="4" width="26" height="30" rx="4" stroke="#2a8cad" strokeWidth="7" />
          <path d="M9 38h22q6-1 7-6" stroke="#287d98" strokeWidth="6" />
          <rect x="5" y="11" width="23" height="26" rx="4" stroke="#f5a41d" strokeWidth="6" />
          <path d="M12 19h9v10h-9z" fill="#fad16a" stroke="#684a16" strokeWidth="2" />
        </Icon>
      </Task>
      <span className="h-[55px] w-[5px] rounded-r border-r border-[#3c5270] bg-[#c5d5e9]" />
      <span className="h-[55px] w-[6px] rounded-r border-r border-[#3c5270] bg-[#b6cae4]" />
      <Task label="PowerPoint" w="ml-[2px] w-[84px]">
        <Icon w={44} h={44}>
          <path d="M8 2h32v40H3V8z" fill="#fbf0e8" stroke="#b94b20" strokeWidth="1.500" />
          <path d="M13 28V7h8q8 1 7 7t-9 6h-6" stroke="#dd5525" strokeWidth="6" />
          <path d="M20 21l23 3-4 19-22-5z" fill="#fff" stroke="#d9a48a" />
          <circle cx="32" cy="28" r="5" fill="#e16436" />
          <path d="M22 33l8 3M22 37l12 3" stroke="#e16436" strokeWidth="2" />
        </Icon>
      </Task>
      <Task label="WPS文字" w="ml-1 w-[83px]" className="bg-linear-to-br from-[#f1f6fc] to-[#d2e0f2]">
        <Icon w={46} h={46}>
          <rect width="46" height="46" rx="9" fill="#2c96f6" />
          <path d="M12 15v16l11-11 11 11V15" stroke="#fff" strokeWidth="3" />
        </Icon>
      </Task>
      <Task label="Excel" w="ml-1 w-[83px]">
        <Icon w={44} h={42}>
          <path d="M8 1h33v40H2V7z" fill="#f2f8ec" stroke="#3b8546" strokeWidth="1.500" />
          <path d="M24 3h15v16H24z" fill="#a3cf9b" />
          <path d="M9 8l18 24M26 8L9 31" stroke="#39833c" strokeWidth="6" />
          <path d="M25 20l17 4-5 17-22-5z" fill="#fff" stroke="#a8c8a2" />
          <path d="M26 25l6 2M34 28l5 1M24 31l6 2M32 34l5 1" stroke="#51a05a" strokeWidth="2" />
        </Icon>
      </Task>
      <Task label="录屏" w="ml-1 w-[83px]">
        <Icon w={38} h={46}>
          <path d="M6 10l14-8 4 12-4 28-12 3-4-26z" fill="#26282a" />
          <path d="M18 14l17-3 2 19-16 4z" fill="#8a9131" stroke="#3a3c20" strokeWidth="2" />
          <path d="M24 17v12M29 16v12" stroke="#b2b95a" />
          <circle cx="8" cy="9" r="7" fill="#aab1b5" stroke="#333" strokeWidth="2" />
          <circle cx="8" cy="9" r="3" fill="#555" />
        </Icon>
      </Task>
      <div className="ml-auto flex h-full items-center">
        <Grip />
        <Tool label="搜狗输入法" w="ml-2 w-8">
          <Icon w={22} h={24}>
            <path d="M1 3l17-3 4 20-17 4z" fill="#f1582a" />
            <path d="M16 6q-9-1-9 2t5 4 4 4-8 2" stroke="#fff" strokeWidth="3" />
          </Icon>
        </Tool>
        <Tool label="帮助" w="w-8">
          <Icon w={22} h={22}>
            <circle cx="11" cy="11" r="10" fill="#1420b8" stroke="#cdd5ea" strokeWidth="1.500" />
            <path d="M8 8q0-3 3-3t3 3-3 4v2M11 16v2" stroke="#fff" strokeWidth="2.500" />
          </Icon>
        </Tool>
        <Tool label="语言栏" w="w-7" className="pb-3">
          <Icon w={14} h={30}>
            <path d="M1 5h8v5H1zM4 4V1h8v6H9" stroke="#fff" strokeWidth="1.500" />
            <path d="M2 23h9l-4.500 5z" fill="#fff" />
          </Icon>
        </Tool>
        <Tool label="显示隐藏图标" w="w-6"><Icon w={11} h={9}><path d="M0 8l5.500-8L11 8z" fill="#fff" /></Icon></Tool>
        <Tool label="蓝牙" w="ml-9 w-[34px]">
          <Icon w={18} h={28}>
            <ellipse cx="9" cy="14" rx="9" ry="13" fill="#173c72" />
            <path d="M4 9l9 9-4 4V6l4 4-9 9" stroke="#fff" strokeWidth="1.800" />
          </Icon>
        </Tool>
        <Tool label="显卡" w="w-[34px]">
          <Icon w={24} h={26}>
            <circle cx="12" cy="13" r="12" fill="#4c9d2c" />
            <path d="M2 8Q10-3 20 5l3 10-11 10Q-2 22 2 8z" fill="#e0d629" />
            <path d="M8 19V9q5-3 7 2v7" stroke="#28702a" strokeWidth="3" />
          </Icon>
        </Tool>
        <Tool label="操作中心" w="w-[34px]">
          <Icon w={22} h={26}>
            <path d="M2 2v23M5 4h13v10H5z" stroke="#fff" strokeWidth="2.500" />
            <circle cx="14" cy="18" r="7" fill="#d84938" />
            <path d="M11 15l6 6M17 15l-6 6" stroke="#fff" strokeWidth="2" />
          </Icon>
        </Tool>
        <Tool label="网络" w="w-[34px]">
          <Icon w={22} h={24}>
            <path d="M6 6h14v11H6zM10 21h8M2 1v20M2 5h5" stroke="#fff" strokeWidth="2.500" />
          </Icon>
        </Tool>
        <Tool label="音量" w="w-[34px]">
          <Icon w={22} h={22}>
            <path d="M1 8h4l6-6v18l-6-6H1z" fill="#fff" />
            <path d="M14 7q3 4 0 8M17 4q5 7 0 14" stroke="#fff" strokeWidth="1.500" />
          </Icon>
        </Tool>
        <button aria-label="显示桌面" className="ml-2 mr-px h-[54px] w-5 rounded-[2px] border border-[#46566e] bg-linear-to-b from-[#b5c2d4] to-[#74859e] shadow-[inset_0_0_0_1px_#c6d0df]" />
      </div>
    </div>
  );
}

function InputMethodBar() {
  return (
    <div className="absolute bottom-[232px] right-[60px] flex h-[31px] w-[208px] items-center border border-r-0 border-[#b5b9bd] bg-linear-to-b from-white to-[#eef6fc] pl-[2px]">
      <Tool label="输入法" w="w-7"><Emblem size={25} /></Tool>
      <Tool label="中英文" w="w-[31px]" className="text-[20px] font-bold text-[#4285d2]">英</Tool>
      <Tool label="全半角" w="w-[26px]">
        <Icon w={18} h={18}><path d="M10 0q3 10-10 13 5 7 13 3 9-9-3-16z" fill="#4285d2" /></Icon>
      </Tool>
      <Tool label="标点" w="w-[28px]">
        <Icon w={13} h={16}><path d="M1 1h4v4H1zM8 9h4v3l-3 4H7l2-4H8z" fill="#4285d2" /></Icon>
      </Tool>
      <Tool label="软键盘" w="w-[28px]">
        <Icon w={24} h={16}>
          <path d="M1 1h22v14H1z" stroke="#3f80cb" strokeWidth="2" />
          <path d="M4 5h17M4 8h17" stroke="#3f80cb" strokeWidth="2" strokeDasharray="2 1.500" />
          <path d="M3 12h2M7 12h10M19 12h2" stroke="#3f80cb" strokeWidth="2" />
        </Icon>
      </Tool>
      <Tool label="用户" w="w-[30px]">
        <Icon w={15} h={18}>
          <circle cx="7.500" cy="4.500" r="4.500" fill="#b2b4b6" />
          <path d="M0 18q0-9 7.500-9t7.500 9z" fill="#b2b4b6" />
        </Icon>
      </Tool>
      <Tool label="设置" w="w-[28px]">
        <Icon w={19} h={19}><path d="M1 15l8-8q-1-6 6-7l-3 4 3 3 4-3q0 8-8 7l-7 8q-4 0-3-4z" fill="#3f80cb" /></Icon>
      </Tool>
    </div>
  );
}

export default function App() {
  return (
    <div className={`relative h-screen overflow-hidden bg-black px-[60px] text-[17px] ${ui}`}>
      <div className="flex h-full flex-col">
        <TitleBar />
        <Ribbon />
        <TabStrip />
        <div className="flex min-h-0 flex-1">
          <Sidebar />
          <Document />
          <ScrollColumn />
          <PaneBar />
        </div>
        <StatusBar />
        <Taskbar />
      </div>
      <InputMethodBar />
      <div className="absolute bottom-[113px] right-[39px] opacity-85">
        <Icon w={56} h={52}>
          <path d="M16 2l8 9M40 2l-8 9" stroke="#fff" strokeWidth="5" strokeLinecap="round" />
          <rect y="8" width="56" height="43" rx="9" fill="#f2f2f2" />
          <path d="M20 22q0-4 4-2l13 8q2 2 0 4l-13 8q-4 2-4-2z" fill="#555" />
        </Icon>
      </div>
      <p className="absolute bottom-[12px] right-[4px] whitespace-nowrap font-['Noto_Sans_CJK_SC',sans-serif] text-[38px] font-light leading-[46px] text-[#dcdcdc] [text-shadow:1px_1px_2px_#555]">
        CSDN @蓝影铁哥
      </p>
    </div>
  );
}
